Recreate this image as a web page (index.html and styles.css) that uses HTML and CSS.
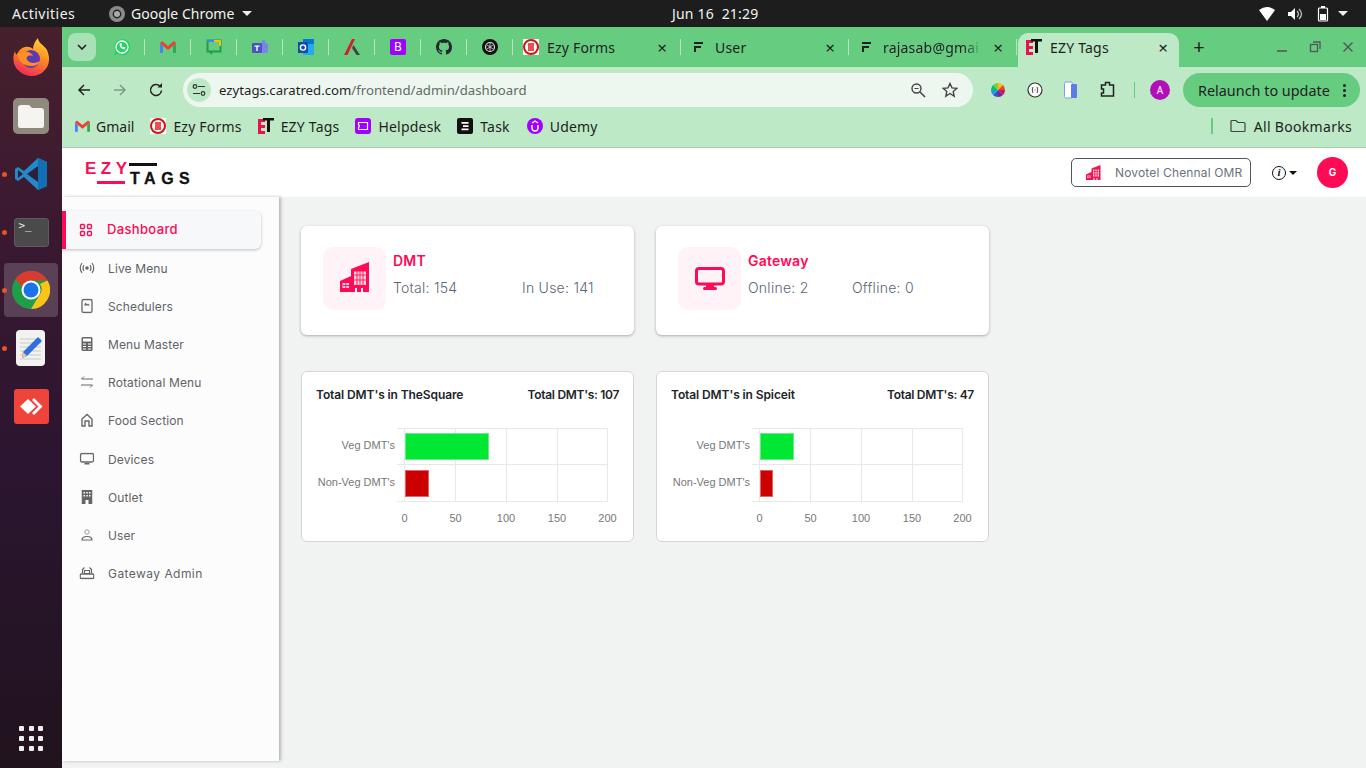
FILE: index.html
```html
<!DOCTYPE html>
<html lang="en">
<head>
    <meta charset="UTF-8" />
    <meta name="viewport" content="width=device-width, initial-scale=1.0" />
    <title>EZY Tags</title>
    <link rel="stylesheet" href="styles.css">
</head>
<body>
    <header class="topbar">
        <span class="activities">Activities</span>
        <span class="app-name">
            <svg class="app-icon" width="16" height="16" viewBox="0 0 16 16"><circle cx="8" cy="8" r="8" fill="#8b8b8b"/><circle cx="8" cy="8" r="4.4" fill="#222"/><circle cx="8" cy="8" r="3" fill="#aaa"/></svg>
            Google Chrome
            <i class="caret-white"></i>
        </span>
        <span class="clock">Jun 16&nbsp; 21:29</span>
        <span class="tray">
            <svg width="16" height="14" viewBox="0 0 16 14"><path d="M0 3 Q8 -3 16 3 L8 14 Z" fill="#fff"/></svg>
            <svg width="16" height="14" viewBox="0 0 16 14"><path d="M1 5h3l4-4v12l-4-4H1z" fill="#fff"/><path d="M10 4q3 3 0 6M12 2q5 5 0 10" stroke="#bbb" stroke-width="1.3" fill="none"/></svg>
            <svg width="12" height="16" viewBox="0 0 12 16"><rect x="1.5" y="2" width="9" height="13" rx="1" fill="none" stroke="#fff" stroke-width="1.2"/><rect x="4" y="0" width="4" height="2" fill="#fff"/><rect x="3" y="8" width="6" height="6" fill="#fff"/></svg>
            <i class="caret-white"></i>
        </span>
    </header>

    <div class="desktop">
        <nav class="dock">
            <div class="dock-item">
                <svg class="firefox" width="36" height="38" viewBox="0 0 36 38"><defs><linearGradient id="fx" x1="0.7" y1="0" x2="0.3" y2="1"><stop offset="0" stop-color="#ffd23a"/><stop offset="0.45" stop-color="#ff8a1f"/><stop offset="1" stop-color="#f0245f"/></linearGradient></defs><path d="M25 0c0 5 6 7 9 12 4 9 2 17-4 22-7 6-18 5-24-1C0 28-1 20 2 13c0 2 1 3 2 4 1-4 4-7 8-8 3-.5 6 0 8 2 0-4 2-8 5-11z" fill="url(#fx)"/><circle cx="18" cy="21" r="9" fill="#5b3bb5"/><path d="M4 16c2 8 7 12 14 12 5 0 8-2 9-5-3 2-9 3-12 0-2-2-2-4 0-5 3-1 5 0 5 0-1-3-5-5-9-4-3 0-6 1-7 2z" fill="#ff8f24"/></svg>
            </div>
            <div class="dock-item">
                <svg width="36" height="36" viewBox="0 0 36 36"><rect width="36" height="36" rx="5" fill="#8f8a7e"/><path d="M5 10q0-3 3-3h8l3 3h9q3 0 3 3v15q0 2-2 2H7q-2 0-2-2z" fill="#f5f4f0"/></svg>
            </div>
            <div class="dock-item has-dot">
                <svg width="34" height="34" viewBox="0 0 34 34"><path d="M24 1 33 5v24l-9 4-14-13-6 4-3-2V12l3-2 6 4z" fill="#2489ca"/><path d="M24 1 33 5v24l-9 4z" fill="#1070b3"/><path d="M24 9v16L13 17z" fill="#2d2038"/><path d="M4 13l5 4-5 4z" fill="#2d2038"/></svg>
            </div>
            <div class="dock-item has-dot">
                <div class="terminal-icon"><span>&gt;_</span></div>
            </div>
            <div class="dock-item has-dot is-active">
                <svg width="38" height="38" viewBox="0 0 38 38"><circle cx="19" cy="19" r="19" fill="#1f9e4a"/><path d="M19 0a19 19 0 0 1 16.5 9.5H19a9.5 9.5 0 0 0-9 6.5L3.5 8A19 19 0 0 1 19 0z" fill="#db3a2e"/><path d="M35.5 9.500A19 19 0 0 1 19 38l8.500-14A9.500 9.500 0 0 0 28 13z" fill="#fcc419"/><circle cx="19" cy="19" r="9.500" fill="#fff"/><circle cx="19" cy="19" r="7.500" fill="#1a73e8"/></svg>
            </div>
            <div class="dock-item has-dot">
                <svg width="30" height="36" viewBox="0 0 30 36"><rect width="29" height="36" rx="4" fill="#f2f2ef"/><path d="M4 9h21M4 13h21M4 17h21M4 21h21M4 25h21M4 29h21" stroke="#c9c9c9"/><path d="M22 7l4 4-15 15-5 2 1-6z" fill="#2f6fde"/><path d="M7 22l4 4-5 2z" fill="#e6c79c"/></svg>
            </div>
            <div class="dock-item">
                <svg width="35" height="35" viewBox="0 0 35 35"><rect width="35" height="35" rx="3" fill="#ef443b"/><path d="M6 17.5 14 10l8 7.5-8 7.5z" fill="#fff"/><path d="M20 9l8.5 8.5L20 26l-2-2 6.500-6.500L18 11z" fill="#fff"/></svg>
            </div>
            <div class="apps-grid">
                <i></i><i></i><i></i><i></i><i></i><i></i><i></i><i></i><i></i>
            </div>
        </nav>

        <div class="browser">
            <div class="tabstrip">
                <button class="tab-search">
                    <svg width="10" height="6" viewBox="0 0 10 6"><path d="M1 1l4 4 4-4" stroke="#222" stroke-width="1.6" fill="none"/></svg>
                </button>
                <div class="pinned">
                    <svg width="16" height="16" viewBox="0 0 16 16"><path d="M0 16l1.200-4.300A8 8 0 1 1 4.300 15z" fill="#25d366"/><circle cx="8" cy="8" r="6" fill="none" stroke="#fff" stroke-width="1.300"/><path d="M5.500 5q0 4.500 5 5.500l1-1.800-1.800-.9-.8.7q-1-.5-1.600-1.800l.8-.8-.8-1.800z" fill="#fff"/></svg>
                </div>
                <div class="pinned">
                    <svg width="16" height="12" viewBox="0 0 16 12"><path d="M0 2v10h3V5z" fill="#4285f4"/><path d="M13 5v7h3V2z" fill="#34a853"/><path d="M0 2l3 3 5 4 5-4 3-3-2-2-6 5-6-5z" fill="#ea4335"/></svg>
                </div>
                <div class="pinned">
                    <svg width="16" height="16" viewBox="0 0 16 16"><rect x="1.5" y="1.5" width="13" height="11" fill="none" stroke="#1e9e4a" stroke-width="2"/><path d="M1 1h7v2H1z" fill="#4285f4"/><path d="M8 1h7v6h-2V3H8z" fill="#fbbc04"/><path d="M3 13h3v3z" fill="#1e9e4a"/></svg>
                </div>
                <div class="pinned">
                    <svg width="16" height="15" viewBox="0 0 16 15"><rect x="8" y="3" width="8" height="10" rx="2" fill="#7b83eb"/><circle cx="11.500" cy="1.800" r="1.800" fill="#7b83eb"/><rect x="0" y="3" width="10" height="10" rx="1" fill="#4b53bc"/><path d="M2.500 5.500h5v1.200H5.700V11H4.300V6.700H2.500z" fill="#fff"/></svg>
                </div>
                <div class="pinned">
                    <svg width="16" height="16" viewBox="0 0 16 16"><rect x="5" y="0" width="11" height="16" fill="#28a8ea"/><rect x="5" y="0" width="11" height="5" fill="#0078d4"/><rect y="3" width="10" height="11" fill="#0f4fa8"/><circle cx="5" cy="8.500" r="2.600" fill="none" stroke="#fff" stroke-width="1.400"/></svg>
                </div>
                <div class="pinned">
                    <svg width="16" height="16" viewBox="0 0 16 16"><path d="M0 16 8 0h3L3.500 16z" fill="#d3202b"/><path d="M9.500 6 16 16h-3.500L8 9z" fill="#444"/></svg>
                </div>
                <div class="pinned">
                    <div class="letter-icon">B</div>
                </div>
                <div class="pinned">
                    <svg width="16" height="16" viewBox="0 0 16 16"><path fill="#24292f" d="M8 0C3.580 0 0 3.580 0 8c0 3.540 2.290 6.530 5.470 7.590.4.070.55-.17.55-.38 0-.19-.01-.82-.01-1.490-2.010.37-2.530-.49-2.690-.94-.09-.23-.48-.94-.82-1.130-.28-.15-.68-.52-.01-.53.630-.01 1.080.58 1.230.82.720 1.210 1.870.87 2.330.66.070-.52.280-.87.510-1.070-1.780-.2-3.640-.89-3.640-3.950 0-.87.310-1.590.820-2.150-.08-.2-.36-1.020.08-2.120 0 0 .67-.21 2.200.82.640-.18 1.320-.27 2-.27s1.360.09 2 .27c1.530-1.040 2.200-.82 2.200-.82.44 1.100.16 1.920.08 2.120.51.56.82 1.270.82 2.150 0 3.070-1.870 3.750-3.650 3.950.29.250.54.730.54 1.480 0 1.070-.01 1.930-.01 2.200 0 .21.150.46.550.38A8.010 8.010 0 0 0 16 8c0-4.420-3.580-8-8-8z"/></svg>
                </div>
                <div class="pinned">
                    <svg width="16" height="16" viewBox="0 0 16 16"><circle cx="8" cy="8" r="8" fill="#111"/><circle cx="8" cy="8" r="4.500" fill="none" stroke="#ddd" stroke-width="1.200"/><path d="M5 6l6 4M5 10l6-4M8 3.500v9" stroke="#ddd" stroke-width=".8"/></svg>
                </div>
                <div class="tab">
                    <svg width="16" height="16" viewBox="0 0 16 16"><rect width="16" height="16" fill="#fff"/><circle cx="8" cy="8" r="7" fill="none" stroke="#d3121a" stroke-width="2"/><rect x="5" y="4" width="6" height="8" fill="#e9504f"/></svg>
                    <span class="tab-label">Ezy Forms</span>
                    <span class="tab-close">&times;</span>
                </div>
                <div class="tab">
                    <svg width="16" height="12" viewBox="0 0 16 12"><path d="M3 1h9v2H3zM3 5h7v2H5v4H3z" fill="#222"/></svg>
                    <span class="tab-label">User</span>
                    <span class="tab-close">&times;</span>
                </div>
                <div class="tab tab-clip">
                    <svg width="16" height="12" viewBox="0 0 16 12"><path d="M3 1h9v2H3zM3 5h7v2H5v4H3z" fill="#222"/></svg>
                    <span class="tab-label">rajasab@gmai</span>
                    <span class="tab-close">&times;</span>
                </div>
                <div class="tab tab-active">
                    <svg width="16" height="17" viewBox="0 0 16 17"><path d="M0 1h7v3H3v3h4v3H3v3h4v3H0z" fill="#e8124f"/><path d="M5 0h11v2.500h-4V14H9V2.500H5z" fill="#111"/></svg>
                    <span class="tab-label">EZY Tags</span>
                    <span class="tab-close">&times;</span>
                </div>
                <span class="new-tab">+</span>
                <div class="win-controls">
                    <svg width="12" height="12" viewBox="0 0 12 12"><path d="M1 10h10" stroke="#555" stroke-width="1.5"/></svg>
                    <svg width="12" height="12" viewBox="0 0 12 12"><rect x="1.5" y="3.5" width="7" height="7" fill="none" stroke="#555" stroke-width="1.3"/><path d="M4 1h7v7" fill="none" stroke="#555" stroke-width="1.3"/></svg>
                    <svg width="12" height="12" viewBox="0 0 12 12"><path d="M1.500 1.500l9 9M10.500 1.500l-9 9" stroke="#555" stroke-width="1.4"/></svg>
                </div>
            </div>

            <div class="toolbar">
                <svg class="nav-btn" width="16" height="16" viewBox="0 0 16 16"><path d="M14 8H3M8 3 3 8l5 5" stroke="#222" stroke-width="1.5" fill="none"/></svg>
                <svg class="nav-btn" width="16" height="16" viewBox="0 0 16 16"><path d="M2 8h11M8 3l5 5-5 5" stroke="#7d9c86" stroke-width="1.5" fill="none"/></svg>
                <svg class="nav-btn" width="16" height="16" viewBox="0 0 16 16"><path d="M13.500 8.500A5.500 5.500 0 1 1 12 4.200" stroke="#222" stroke-width="1.5" fill="none"/><path d="M9.500 5.500H14V1z" fill="#222"/></svg>
                <div class="omnibox">
                    <span class="site-btn">
                        <svg width="14" height="12" viewBox="0 0 14 12"><circle cx="3" cy="2.500" r="1.800" fill="none" stroke="#333" stroke-width="1.2"/><path d="M6 2.500h7M1 9.500h7" stroke="#333" stroke-width="1.2"/><circle cx="11" cy="9.500" r="1.800" fill="none" stroke="#333" stroke-width="1.2"/></svg>
                    </span>
                    <span class="url"><b>ezytags.caratred.com</b>/frontend/admin/dashboard</span>
                    <svg class="omni-icon" width="16" height="16" viewBox="0 0 16 16"><circle cx="6.500" cy="6.500" r="4.500" fill="none" stroke="#444" stroke-width="1.4"/><path d="M10 10l5 5" stroke="#444" stroke-width="1.6"/><path d="M4.500 6.500h4" stroke="#444"/></svg>
                    <svg class="omni-icon" width="16" height="16" viewBox="0 0 16 16"><path d="M8 1.500l2 4.400 4.700.5-3.500 3.200 1 4.700L8 11.500l-4.200 2.800 1-4.700L1.300 6.400 6 5.900z" fill="none" stroke="#444" stroke-width="1.4"/></svg>
                </div>
                <div class="extensions">
                    <svg width="16" height="16" viewBox="0 0 16 16"><path d="M8 8V1a7 7 0 0 1 5 2z" fill="#f4c20d"/><path d="M8 8l5-5a7 7 0 0 1 2 5z" fill="#ea4335"/><path d="M8 8h7a7 7 0 0 1-2 5z" fill="#c2185b"/><path d="M8 8l5 5a7 7 0 0 1-5 2z" fill="#7b1fa2"/><path d="M8 8v7a7 7 0 0 1-5-2z" fill="#3f51b5"/><path d="M8 8l-5 5a7 7 0 0 1-2-5z" fill="#2196f3"/><path d="M8 8H1a7 7 0 0 1 2-5z" fill="#00c853"/><path d="M8 8 3 3a7 7 0 0 1 5-2z" fill="#8bc34a"/></svg>
                    <svg width="16" height="16" viewBox="0 0 16 16"><circle cx="8" cy="8" r="7" fill="#fff" stroke="#333" stroke-width="1.2"/><path d="M6 5q-1.500 3 0 6M10 5q1.500 3 0 6" stroke="#444" fill="none"/><path d="M7.500 8h1" stroke="#444"/></svg>
                    <svg width="16" height="18" viewBox="0 0 16 18"><rect x="1.500" y="1" width="8" height="16" rx="1.500" fill="#fff" stroke="#7f9ff0"/><rect x="8" y="3" width="6" height="14" rx="1" fill="#5c7de8"/></svg>
                    <svg width="16" height="18" viewBox="0 0 16 18"><path d="M1.500 4h4V1.500h4V4h4v11h-12v-3h2V8h-2z" fill="none" stroke="#222" stroke-width="1.5"/></svg>
                </div>
                <i class="toolbar-sep"></i>
                <span class="profile">A</span>
                <button class="relaunch">
                    Relaunch to update
                    <span class="dots"><i></i><i></i><i></i></span>
                </button>
            </div>

            <div class="bookmarks">
                <span class="bm bm-gmail">
                    <svg width="15" height="12" viewBox="0 0 16 12"><path d="M0 2v10h3V5z" fill="#4285f4"/><path d="M13 5v7h3V2z" fill="#34a853"/><path d="M0 2l3 3 5 4 5-4 3-3-2-2-6 5-6-5z" fill="#ea4335"/></svg>
                    Gmail
                </span>
                <span class="bm">
                    <svg width="16" height="16" viewBox="0 0 16 16"><rect width="16" height="16" fill="#fff"/><circle cx="8" cy="8" r="7" fill="none" stroke="#d3121a" stroke-width="2"/><rect x="5" y="4" width="6" height="8" fill="#e9504f"/></svg>
                    Ezy Forms
                </span>
                <span class="bm">
                    <svg width="16" height="17" viewBox="0 0 16 17"><path d="M0 1h7v3H3v3h4v3H3v3h4v3H0z" fill="#e8124f"/><path d="M5 0h11v2.500h-4V14H9V2.500H5z" fill="#111"/></svg>
                    EZY Tags
                </span>
                <span class="bm">
                    <svg width="16" height="16" viewBox="0 0 16 16"><rect width="16" height="16" rx="3" fill="#a100ff"/><path d="M3.500 4.500h9v7h-9V9.500q1.500-1.500 0-3z" fill="none" stroke="#fff" stroke-width="1.2"/></svg>
                    Helpdesk
                </span>
                <span class="bm">
                    <svg width="16" height="16" viewBox="0 0 16 16"><rect width="16" height="16" rx="2" fill="#111"/><path d="M4.500 4h7v1.800h-7zM6 7.200h5.500V9H6zM4.500 10.400h7v1.800h-7z" fill="#fff"/></svg>
                    Task
                </span>
                <span class="bm bm-udemy">
                    <svg width="16" height="16" viewBox="0 0 16 16"><circle cx="8" cy="8" r="8" fill="#a100ff"/><path d="M5 7v3a3 3 0 0 0 6 0V7M5 5l3-2 3 2" stroke="#fff" stroke-width="1.4" fill="none"/></svg>
                    Udemy
                </span>
                <i class="bm-sep"></i>
                <span class="bm bm-all">
                    <svg width="16" height="14" viewBox="0 0 16 14"><path d="M1 2.500q0-1 1-1h4l2 2h6q1 0 1 1v7q0 1-1 1H2q-1 0-1-1z" fill="none" stroke="#444" stroke-width="1.2"/></svg>
                    All Bookmarks
                </span>
            </div>

            <div class="app">
                <div class="app-header">
                    <div class="logo">
                        <span class="logo-ezy">EZY</span>
                        <span class="logo-tags">TAGS</span>
                    </div>
                    <div class="outlet-chip">
                        <svg width="15" height="15" viewBox="0 0 30 30"><path d="M0 19 11 14V7L29 0V30H23V26H21V30H17V26H15V30H0z" fill="#f0134f"/><path d="M14 9h12v14H14zM2.500 21H9v5H2.500z" fill="#ffd6e2"/><path d="M17 8v15M20 7v16M23 6v17M14 13h12M14 18h12M6 21v5M2.500 23.500H9" stroke="#f0134f" stroke-width="1.2"/></svg>
                        <span>Novotel Chennal OMR</span>
                    </div>
                    <div class="info-btn">
                        <span class="info-icon">i</span>
                        <i class="caret-black"></i>
                    </div>
                    <span class="user-avatar">G</span>
                </div>

                <div class="app-body">
                    <aside class="sidebar">
                        <a class="menu-item active">
                            <svg width="14" height="14" viewBox="0 0 14 14"><g fill="none" stroke="#f60f54" stroke-width="1.4"><rect x="1.500" y="1.500" width="4" height="4" rx="1"/><rect x="8.500" y="1.500" width="4" height="4" rx="1"/><rect x="1.500" y="8.500" width="4" height="4" rx="1"/><rect x="8.500" y="8.500" width="4" height="4" rx="1"/></g></svg>
                            <span>Dashboard</span>
                        </a>
                        <a class="menu-item">
                            <svg width="16" height="14" viewBox="0 0 16 14"><g fill="none" stroke="#666" stroke-width="1.2"><path d="M5 4q-2 3 0 6M11 4q2 3 0 6M3 2q-3.500 5 0 10M13 2q3.500 5 0 10"/></g><circle cx="8" cy="7" r="1.800" fill="#666"/></svg>
                            <span>Live Menu</span>
                        </a>
                        <a class="menu-item">
                            <svg width="12" height="15" viewBox="0 0 12 15"><rect x="1" y="1" width="10" height="13" rx="1.500" fill="none" stroke="#666" stroke-width="1.3"/><path d="M3 7l1.500-3L6 6l1-1 2 2z" fill="#666"/></svg>
                            <span>Schedulers</span>
                        </a>
                        <a class="menu-item">
                            <svg width="12" height="15" viewBox="0 0 12 15"><rect x=".5" y=".5" width="11" height="14" rx="1.500" fill="#666"/><rect x="2" y="2" width="8" height="3" fill="#fff"/><path d="M2 7h3v1H2zM7 7h3v1H7zM2 9.500h3v1H2zM7 9.500h3v1H7zM2 12h3v1H2zM7 12h3v1H7z" fill="#fff"/></svg>
                            <span>Menu Master</span>
                        </a>
                        <a class="menu-item">
                            <svg width="14" height="13" viewBox="0 0 14 13"><path d="M13 3.500H1.500L4 1M1 9.500h11.500L10 12" fill="none" stroke="#666"/></svg>
                            <span>Rotational Menu</span>
                        </a>
                        <a class="menu-item">
                            <svg width="14" height="14" viewBox="0 0 14 14"><path d="M2 13V6l5-4.500L12 6v7H9V8H5v5z" fill="none" stroke="#666" stroke-width="1.4"/></svg>
                            <span>Food Section</span>
                        </a>
                        <a class="menu-item menu-gap">
                            <svg width="15" height="13" viewBox="0 0 15 13"><rect x="1" y="1" width="13" height="8.500" rx="1.500" fill="none" stroke="#666" stroke-width="1.3"/><path d="M5 12h5v-1.500H5z" fill="#666"/></svg>
                            <span>Devices</span>
                        </a>
                        <a class="menu-item">
                            <svg width="11" height="14" viewBox="0 0 11 14"><rect width="11" height="14" fill="#666"/><path d="M2 2h1.500v1.500H2zM4.800 2h1.500v1.500H4.800zM7.500 2H9v1.500H7.500zM2 5h1.500v1.500H2zM4.800 5h1.500v1.500H4.800zM7.500 5H9v1.500H7.500zM4 10h3v4H4z" fill="#fff"/></svg>
                            <span>Outlet</span>
                        </a>
                        <a class="menu-item">
                            <svg width="12" height="12" viewBox="0 0 12 12"><circle cx="6" cy="3" r="2.200" fill="none" stroke="#999"/><path d="M1 11q0-3.500 5-3.500t5 3.500z" fill="none" stroke="#666" stroke-width="1.2"/></svg>
                            <span>User</span>
                        </a>
                        <a class="menu-item menu-wide">
                            <svg width="15" height="13" viewBox="0 0 15 13"><rect x=".7" y="7.500" width="13.600" height="4.500" rx="1" fill="none" stroke="#666" stroke-width="1.3"/><path d="M3 7V3l2-2M12 7V3l-2-2M5 4h5v3H5z" fill="none" stroke="#666" stroke-width="1.2"/></svg>
                            <span>Gateway Admin</span>
                        </a>
                    </aside>

                    <main class="content">
                        <section class="row">
                            <div class="stat-card">
                                <div class="stat-icon">
                                    <svg class="building" width="30" height="30" viewBox="0 0 30 30"><path d="M0 19 11 14V7L29 0V30H23V26H21V30H17V26H15V30H0z" fill="#ff0a54"/><path d="M14 9.500h12V23H14zM2.500 21H9v5H2.500z" fill="#ffd6e2"/><path d="M17 8v15M20 7v16M23 6v17M14 13h12M14 18h12M5.800 21v5M2.500 23.500H9" stroke="#ff0a54" stroke-width=".9"/></svg>
                                </div>
                                <div class="stat-body">
                                    <h4>DMT</h4>
                                    <div class="stat-values stat-dmt">
                                        <span>Total: 154</span>
                                        <span>In Use: 141</span>
                                    </div>
                                </div>
                            </div>
                            <div class="stat-card">
                                <div class="stat-icon">
                                    <svg width="30" height="24" viewBox="0 0 30 24"><rect x="1.500" y="1.500" width="27" height="15.500" rx="2.500" fill="none" stroke="#ff0a54" stroke-width="3"/><path d="M11 17h8v3h-8z" fill="#ff0a54"/><rect x="8" y="20" width="14" height="3" rx="1.500" fill="#ff0a54"/></svg>
                                </div>
                                <div class="stat-body">
                                    <h4>Gateway</h4>
                                    <div class="stat-values stat-gateway">
                                        <span>Online: 2</span>
                                        <span>Offline: 0</span>
                                    </div>
                                </div>
                            </div>
                        </section>

                        <section class="row">
                            <div class="chart-card">
                                <div class="chart-head">
                                    <span>Total DMT's in TheSquare</span>
                                    <span>Total DMT's: 107</span>
                                </div>
                                <svg class="chart" width="331" height="126" viewBox="0 0 331 126">
                                    <path class="grid" d="M95 20.500H305.500M95 56.500H305.500M95 93.500H305.500M102.500 20V94M153.500 20V94M204.500 20V94M255.500 20V94M305.500 20V94"/>
                                    <rect class="bar-veg" x="103.500" y="25.500" width="83" height="26"/>
                                    <rect class="bar-nonveg" x="103.500" y="62.500" width="23" height="26"/>
                                    <text class="tick" x="93" y="41" text-anchor="end">Veg DMT's</text>
                                    <text class="tick" x="93" y="78" text-anchor="end">Non-Veg DMT's</text>
                                    <text class="tick" x="102.500" y="114" text-anchor="middle">0</text>
                                    <text class="tick" x="153.500" y="114" text-anchor="middle">50</text>
                                    <text class="tick" x="204" y="114" text-anchor="middle">100</text>
                                    <text class="tick" x="255" y="114" text-anchor="middle">150</text>
                                    <text class="tick" x="305.500" y="114" text-anchor="middle">200</text>
                                </svg>
                            </div>
                            <div class="chart-card">
                                <div class="chart-head">
                                    <span>Total DMT's in Spiceit</span>
                                    <span>Total DMT's: 47</span>
                                </div>
                                <svg class="chart" width="331" height="126" viewBox="0 0 331 126">
                                    <path class="grid" d="M95 20.500H305.500M95 56.500H305.500M95 93.500H305.500M102.500 20V94M153.500 20V94M204.500 20V94M255.500 20V94M305.500 20V94"/>
                                    <rect class="bar-veg" x="103.500" y="25.500" width="33" height="26"/>
                                    <rect class="bar-nonveg" x="103.500" y="62.500" width="12" height="26"/>
                                    <text class="tick" x="93" y="41" text-anchor="end">Veg DMT's</text>
                                    <text class="tick" x="93" y="78" text-anchor="end">Non-Veg DMT's</text>
                                    <text class="tick" x="102.500" y="114" text-anchor="middle">0</text>
                                    <text class="tick" x="153.500" y="114" text-anchor="middle">50</text>
                                    <text class="tick" x="204" y="114" text-anchor="middle">100</text>
                                    <text class="tick" x="255" y="114" text-anchor="middle">150</text>
                                    <text class="tick" x="305.500" y="114" text-anchor="middle">200</text>
                                </svg>
                            </div>
                        </section>
                    </main>
                </div>
            </div>
        </div>
    </div>
</body>
</html>
```

FILE: styles.css
```css
:root {
    --tab-green: #66cc80;
    --toolbar-green: #bde9c6;
    --pink: #ff0a54;
    --chrome-font: "Noto Sans", sans-serif;
    --app-font: Inter, "Liberation Sans", sans-serif;
}

* {
    margin: 0;
    padding: 0;
    box-sizing: border-box;
}

html, body {
    height: 768px;
    overflow: hidden;
}

body {
    display: flex;
    flex-direction: column;
    font-family: var(--chrome-font);
    background: #1d1d1d;
}

/* ubuntu top bar */
.topbar {
    height: 27px;
    flex: none;
    display: flex;
    align-items: center;
    position: relative;
    background: #1d1d1d;
    color: #f2f2f2;
    font-size: 14px;
    padding-left: 12px;
}

.activities {
    width: 97px;
    letter-spacing: 0.5px;
}

.app-name {
    display: flex;
    align-items: center;
    gap: 6px;
}

.app-icon {
    flex: none;
}

.caret-white {
    display: inline-block;
    border-left: 5px solid transparent;
    border-right: 5px solid transparent;
    border-top: 5px solid #eee;
    margin-left: 2px;
}

.clock {
    position: absolute;
    left: 672px;
    top: 4px;
    font-size: 14px;
    letter-spacing: 0.2px;
}

.tray {
    margin-left: auto;
    display: flex;
    align-items: center;
    gap: 12px;
    padding-right: 18px;
}

.tray svg:nth-child(3) {
    margin-left: 2px;
}

.tray .caret-white {
    margin-left: -3px;
}

.desktop {
    flex: 1;
    display: flex;
    min-height: 0;
}

/* dock */
.dock {
    width: 62px;
    flex: none;
    display: flex;
    flex-direction: column;
    align-items: center;
    padding-top: 2px;
    background: linear-gradient(to bottom, #46202c 0%, #391831 30%, #2b1530 60%, #21131e 100%);
}

.dock-item {
    width: 54px;
    height: 58px;
    flex: none;
    display: flex;
    align-items: center;
    justify-content: center;
    position: relative;
}

.firefox {
    margin-bottom: 3px;
}

.dock-item.has-dot::before {
    content: "";
    position: absolute;
    left: -2px;
    top: 27px;
    width: 5px;
    height: 5px;
    border-radius: 50%;
    background: #e95420;
}

.dock-item.is-active {
    background: rgba(255, 255, 255, 0.18);
    border-radius: 4px;
    height: 54px;
    margin: 2px 0;
}

.dock-item.is-active::before {
    top: 25px;
}

.terminal-icon {
    width: 35px;
    height: 29px;
    background: #4a4a4a;
    border: 1px solid #5c5c5c;
    border-radius: 3px;
    color: #eee;
    font: 11px "DejaVu Sans Mono", monospace;
    padding-left: 4px;
}

.apps-grid {
    margin-top: auto;
    margin-bottom: 17px;
    width: 24px;
    display: grid;
    grid-template-columns: repeat(3, 5px);
    justify-content: space-between;
    gap: 5px 0;
}

.apps-grid i {
    width: 5px;
    height: 5px;
    border-radius: 1px;
    background: #eee;
}

/* chrome */
.browser {
    flex: 1;
    min-width: 0;
    display: flex;
    flex-direction: column;
}

.tabstrip {
    height: 40px;
    flex: none;
    display: flex;
    align-items: flex-start;
    background: var(--tab-green);
    color: #1f1f1f;
    font-size: 14px;
}

.tab-search {
    width: 28px;
    height: 28px;
    margin: 6px 3px 0 6px;
    border: none;
    border-radius: 8px;
    background: #a9e1b6;
    display: flex;
    align-items: center;
    justify-content: center;
    flex: none;
}

.pinned {
    width: 46px;
    height: 40px;
    flex: none;
    display: flex;
    align-items: center;
    justify-content: center;
    position: relative;
}

.pinned::after, .tab::after {
    content: "";
    position: absolute;
    right: 0;
    top: 12px;
    width: 1.5px;
    height: 16px;
    background: #b5e6c0;
}

.letter-icon {
    width: 16px;
    height: 16px;
    border-radius: 2px;
    background: #a100ff;
    color: #fff;
    font-size: 12px;
    line-height: 16px;
    text-align: center;
}

.tab {
    width: 168px;
    height: 40px;
    flex: none;
    display: flex;
    align-items: center;
    padding: 0 13px 0 10px;
    gap: 8px;
    position: relative;
}

.tab svg {
    flex: none;
}

.tab-label {
    flex: 1;
    min-width: 0;
    white-space: nowrap;
    overflow: hidden;
    letter-spacing: 0.2px;
}

.tab-clip .tab-label {
    -webkit-mask-image: linear-gradient(to right, #000 80%, transparent 98%);
    mask-image: linear-gradient(to right, #000 80%, transparent 98%);
}

.tab-close {
    font-size: 17px;
    line-height: 1;
    width: 12px;
    text-align: center;
}

.tab-active {
    width: 161px;
    height: 34px;
    margin: 6px 0 0 1px;
    background: var(--toolbar-green);
    border-radius: 10px 10px 0 0;
    padding: 0 10px 6px 8px;
}

.tab-active::after {
    display: none;
}

.new-tab {
    width: 40px;
    height: 40px;
    flex: none;
    text-align: center;
    line-height: 40px;
    font-size: 20px;
}

.win-controls {
    margin-left: auto;
    display: flex;
    align-items: center;
    height: 40px;
    gap: 21px;
    padding-right: 12px;
}

.toolbar {
    height: 43px;
    flex: none;
    display: flex;
    align-items: center;
    background: var(--toolbar-green);
    padding: 3px 6px 0 14px;
}

.nav-btn {
    flex: none;
    margin-right: 20px;
}

.omnibox {
    width: 790px;
    height: 34px;
    flex: none;
    margin-left: -1px;
    display: flex;
    align-items: center;
    border-radius: 17px;
    background: #edf7f0;
    padding: 0 15px 0 4px;
    font-size: 13.2px;
}

.site-btn {
    width: 24px;
    height: 24px;
    flex: none;
    border-radius: 50%;
    background: var(--toolbar-green);
    display: flex;
    align-items: center;
    justify-content: center;
    margin-right: 8px;
}

.url {
    flex: 1;
    color: #5f6b63;
}

.url b {
    font-weight: 400;
    color: #1f1f1f;
}

.omni-icon {
    margin-left: 16px;
}

.extensions {
    display: flex;
    align-items: center;
    gap: 20.5px;
    margin-left: 17px;
}

.toolbar-sep {
    width: 1.5px;
    height: 16px;
    background: #66cc80;
    margin: 0 16px 0 18px;
}

.profile {
    width: 20px;
    height: 20px;
    margin-left: -1px;
    border-radius: 50%;
    background: #b30fb8;
    color: #fff;
    font-size: 10px;
    line-height: 20px;
    text-align: center;
    flex: none;
}

.relaunch {
    margin-left: 13px;
    width: 177px;
    height: 34px;
    border: none;
    border-radius: 17px;
    background: var(--tab-green);
    color: #1f1f1f;
    font: 14.4px var(--chrome-font);
    display: flex;
    align-items: center;
    justify-content: space-between;
    padding: 0 14px 0 15px;
    flex: none;
}

.dots {
    display: flex;
    flex-direction: column;
    gap: 2px;
}

.dots i {
    width: 3px;
    height: 3px;
    border-radius: 50%;
    background: #1f1f1f;
}

.bookmarks {
    height: 38px;
    flex: none;
    display: flex;
    align-items: center;
    gap: 16px;
    background: var(--toolbar-green);
    border-bottom: 1px solid #a9cdb1;
    padding: 0 14px 5px 13px;
    font-size: 14px;
    letter-spacing: 0.2px;
    color: #1f1f1f;
}

.bm {
    display: flex;
    align-items: center;
    gap: 7px;
    white-space: nowrap;
}

.bm-gmail {
    gap: 6px;
    letter-spacing: 0;
}

.bm-udemy {
    margin-left: 1px;
}

.bm-sep {
    width: 1.5px;
    height: 16px;
    background: #66cc80;
    margin-left: auto;
}

.bm-all {
    gap: 8px;
    margin-left: 1px;
    letter-spacing: 0.3px;
}

/* app */
.app {
    flex: 1;
    min-height: 0;
    display: flex;
    flex-direction: column;
    font-family: var(--app-font);
    background: #f1f2f2;
}

.app-header {
    height: 49px;
    flex: none;
    display: flex;
    align-items: center;
    background: #fff;
    padding: 0 18px 0 23px;
}

.logo {
    position: relative;
    display: flex;
    align-items: flex-start;
    height: 30px;
    width: 108px;
    font-family: "Liberation Sans", sans-serif;
    font-weight: 700;
}

.logo-ezy {
    color: #f60f54;
    font-size: 17px;
    letter-spacing: 4.5px;
    line-height: 18px;
    margin-top: 2px;
    width: 45px;
}

.logo-ezy::after {
    content: "";
    position: absolute;
    left: 12px;
    top: 23px;
    width: 28px;
    height: 3px;
    background: #f60f54;
}

.logo-tags {
    color: #111;
    font-size: 16px;
    letter-spacing: 5.5px;
    line-height: 16px;
    margin-top: 13px;
    -webkit-text-stroke: 0.3px #111;
}

.logo-tags::before {
    content: "";
    position: absolute;
    left: 44px;
    top: 5px;
    width: 28px;
    height: 3px;
    background: #111;
}

.outlet-chip {
    margin-left: auto;
    width: 180px;
    height: 29px;
    display: flex;
    align-items: center;
    gap: 14px;
    padding-left: 14px;
    border: 1px solid #555;
    border-radius: 5px;
    font-size: 12px;
    letter-spacing: 0.15px;
    color: #6b7280;
    white-space: nowrap;
}

.outlet-chip svg {
    flex: none;
}

.info-btn {
    display: flex;
    align-items: center;
    gap: 3px;
    margin-left: 21px;
}

.info-icon {
    width: 14px;
    height: 14px;
    border: 1.5px solid #111;
    border-radius: 50%;
    color: #111;
    font: italic 700 11px/11px "Liberation Serif", serif;
    text-align: center;
}

.caret-black {
    border-left: 4px solid transparent;
    border-right: 4px solid transparent;
    border-top: 4px solid #111;
}

.user-avatar {
    width: 31px;
    height: 31px;
    margin-left: 20px;
    border-radius: 50%;
    background: var(--pink);
    color: #fff;
    font-size: 10px;
    font-weight: 700;
    line-height: 31px;
    text-align: center;
    flex: none;
}

.app-body {
    flex: 1;
    min-height: 0;
    display: flex;
}

.sidebar {
    width: 217px;
    height: 564px;
    flex: none;
    background: #fcfcfc;
    box-shadow: 2px 0 3px rgba(0, 0, 0, 0.25);
    padding-top: 14px;
}

.menu-item {
    height: 38px;
    display: flex;
    align-items: center;
    font-size: 12px;
    letter-spacing: 0.12px;
    color: #5f6368;
    position: relative;
    padding-left: 46px;
}

.menu-gap {
    margin-top: 1px;
}

.menu-wide {
    letter-spacing: 0.45px;
}

.menu-item svg {
    position: absolute;
    left: 25px;
    top: 50%;
    transform: translate(-50%, -50%);
}

.menu-item.active {
    width: 199px;
    color: var(--pink);
    background: #f7f8fa;
    border-left: 4px solid var(--pink);
    border-radius: 0 6px 6px 0;
    box-shadow: 0 1px 3px rgba(0, 0, 0, 0.25);
    padding-left: 41px;
    padding-bottom: 2px;
    font-size: 13px;
    font-weight: 500;
    letter-spacing: 0.35px;
}

.menu-item.active svg {
    left: 20px;
}

.content {
    flex: 1;
    padding: 29px 0 0 22px;
    display: flex;
    flex-direction: column;
    gap: 36px;
}

.row {
    display: flex;
    gap: 22px;
}

.stat-card {
    width: 333px;
    height: 109px;
    display: flex;
    align-items: flex-start;
    gap: 7px;
    padding: 21px 0 0 22px;
    background: #fff;
    border-radius: 6px;
    box-shadow: 0 1px 3px rgba(0, 0, 0, 0.3);
}

.stat-icon {
    width: 63px;
    height: 63px;
    flex: none;
    background: #fff3f7;
    border-radius: 10px;
    display: flex;
    align-items: center;
    justify-content: center;
}

.building {
    margin-bottom: 4px;
}

.stat-body {
    flex: 1;
}

.stat-body h4 {
    color: var(--pink);
    font-size: 14px;
    font-weight: 600;
    letter-spacing: 0.2px;
    line-height: 20px;
    margin: 4px 0 7px;
}

.stat-values {
    display: flex;
    font-size: 14px;
    font-weight: 300;
    letter-spacing: 0.25px;
    line-height: 20px;
    color: #5b6675;
}

.stat-dmt span:first-child {
    width: 129px;
}

.stat-gateway span:first-child {
    width: 104px;
}

.chart-card {
    width: 333px;
    height: 171px;
    background: #fff;
    border: 1px solid #d5d5d5;
    border-radius: 6px;
}

.chart-head {
    display: flex;
    justify-content: space-between;
    padding: 14px 14px 0 14px;
    height: 36px;
    font-size: 12px;
    font-weight: 600;
    line-height: 17px;
    letter-spacing: -0.1px;
    color: #212529;
}

.chart-head span:last-child {
    letter-spacing: -0.3px;
}

.chart {
    display: block;
}

.grid {
    stroke: #e8e8e8;
    stroke-width: 1;
    fill: none;
}

.bar-veg {
    fill: #00e833;
    stroke: #66ee85;
}

.bar-nonveg {
    fill: #cc0000;
    stroke: #e06666;
}

.tick {
    font-family: "Liberation Sans", sans-serif;
    font-size: 11px;
    fill: #777;
}
```
